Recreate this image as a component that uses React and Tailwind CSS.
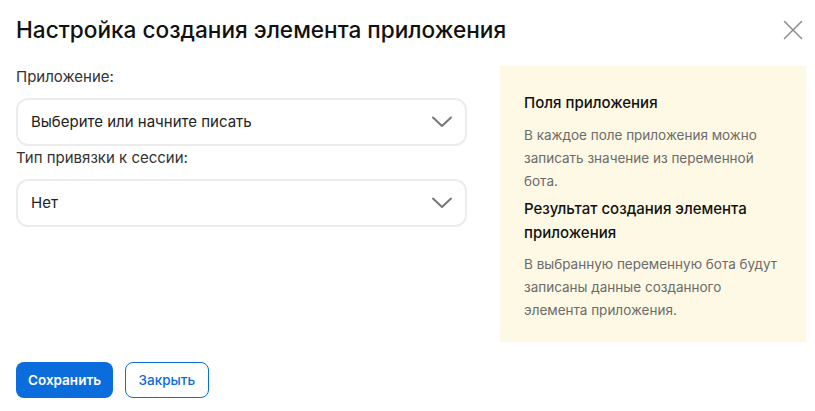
import { X } from 'lucide-react'

function Chevron() {
  return (
    <svg width="22" height="12" viewBox="0 0 22 12" fill="none" className="-mr-[1px]">
      <path d="M2 1.5 L11 10 L20 1.5" stroke="#777" strokeWidth="2" strokeLinecap="round" strokeLinejoin="round" />
    </svg>
  )
}

function Select({ value }) {
  return (
    <div className="flex items-center justify-between h-[48px] pl-[13px] pr-[13px] rounded-xl border-2 border-[#ececec] bg-white">
      <span className="text-[15px] text-[#222]">{value}</span>
      <Chevron />
    </div>
  )
}

export default function App() {
  return (
    <div className="w-[815px] h-[411px] bg-white font-['Inter',sans-serif] relative">
      {/* Header */}
      <div className="flex items-center justify-between pl-4 pr-[5px] pt-[13px]">
        <h1 className="text-[22.6px] font-medium text-[#111] leading-[32px]">Настройка создания элемента приложения</h1>
        <button className="text-[#8a8a8a]">
          <X size={34} strokeWidth={1.05} />
        </button>
      </div>

      {/* Body */}
      <div className="flex pl-4 pr-[9px] mt-[19px] gap-[33px]">
        <div className="w-[451px] flex flex-col">
          <label className="text-[15px] text-[#333] leading-[20px] mt-[1px] mb-[11px]">Приложение:</label>
          <Select value="Выберите или начните писать" />
          <label className="text-[15px] text-[#333] leading-[20px] mt-[2px] mb-[11px]">Тип привязки к сессии:</label>
          <Select value="Нет" />
        </div>
        <div className="w-[306px] h-[276px] bg-[#fef9e5] pl-6 pr-[26px] pt-[25px]">
          <h3 className="text-[15px] font-medium text-[#111] leading-[24px]">Поля приложения</h3>
          <p className="text-[13.5px] text-[#6b6b6b] leading-[23px] mt-[9px]">
            В каждое поле приложения можно записать значение из переменной бота.
          </p>
          <h3 className="text-[15px] font-medium text-[#111] leading-[24px] mt-[4px]">Результат создания элемента приложения</h3>
          <p className="text-[13.5px] text-[#6b6b6b] leading-[23px] mt-[8px]">
            В выбранную переменную бота будут записаны данные созданного элемента&nbsp;приложения.
          </p>
        </div>
      </div>

      {/* Footer */}
      <div className="flex gap-3 pl-4 mt-[20px]">
        <button className="h-[36px] px-3 rounded-lg bg-[#0b6cdb] text-white text-[13.5px] font-semibold">Сохранить</button>
        <button className="h-[36px] px-[12.5px] rounded-lg border border-[#0b6cdb] text-[#0b6cdb] text-[13.5px] font-medium bg-white">Закрыть</button>
      </div>
    </div>
  )
}
